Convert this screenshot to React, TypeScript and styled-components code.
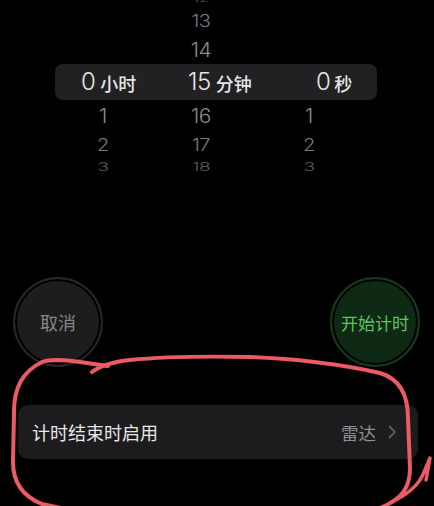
import * as React from 'react';
import styled, { createGlobalStyle } from 'styled-components';

const GlobalStyle = createGlobalStyle`
  html, body {
    margin: 0;
    padding: 0;
    background: #000;
  }
  body {
    font-family: Inter, "Noto Sans CJK SC", sans-serif;
    -webkit-font-smoothing: antialiased;
  }
`;

type Col = { value: string; label: string; offset: number; labelGap: number };

const columns: Col[] = [
  { value: '0', label: '小时', offset: 26, labelGap: 5 },
  { value: '15', label: '分钟', offset: 37, labelGap: 5 },
  { value: '0', label: '秒', offset: 65, labelGap: 4 },
];

type WheelRow = {
  height: number;
  size: number;
  squash: number;
  color: string;
  values: [string, string, string];
};

const above: WheelRow[] = [
  { height: 18, size: 18, squash: 0.45, color: '#4a4a4a', values: ['', '12', ''] },
  { height: 26, size: 20, squash: 0.85, color: '#7d7d7d', values: ['', '13', ''] },
  { height: 30, size: 21, squash: 0.95, color: '#8c8c8c', values: ['', '14', ''] },
];

const below: WheelRow[] = [
  { height: 31, size: 21, squash: 0.95, color: '#8c8c8c', values: ['1', '16', '1'] },
  { height: 27, size: 20, squash: 0.85, color: '#7d7d7d', values: ['2', '17', '2'] },
  { height: 16, size: 19, squash: 0.6, color: '#5e5e5e', values: ['3', '18', '3'] },
  { height: 8, size: 16, squash: 0.3, color: '#3a3a3a', values: ['4', '19', '4'] },
];

const App = () => {
  return (
    <Screen>
      <GlobalStyle />
      <Picker>
        <Wheel>
          {above.map((r, i) => (
            <Row key={'a' + i} $height={r.height}>
              {r.values.map((v, j) => (
                <Cell key={j}>
                  <Num $size={r.size} $squash={r.squash} $color={r.color}>{v}</Num>
                </Cell>
              ))}
            </Row>
          ))}
          <SelectedRow>
            {columns.map((c, j) => (
              <SelectedCell key={j} $offset={c.offset} $gap={c.labelGap}>
                <BigNum>{c.value}</BigNum>
                <Unit>{c.label}</Unit>
              </SelectedCell>
            ))}
          </SelectedRow>
          {below.map((r, i) => (
            <Row key={'b' + i} $height={r.height}>
              {r.values.map((v, j) => (
                <Cell key={j}>
                  <Num $size={r.size} $squash={r.squash} $color={r.color}>{v}</Num>
                </Cell>
              ))}
            </Row>
          ))}
        </Wheel>
      </Picker>

      <Buttons>
        <RoundButton $variant="cancel">取消</RoundButton>
        <RoundButton $variant="start">开始计时</RoundButton>
      </Buttons>

      <ListRow>
        <RowTitle>计时结束时启用</RowTitle>
        <RowValue>
          雷达
          <svg width="9" height="14" viewBox="0 0 9 14">
            <path d="M1.5 1.5 L7 7 L1.5 12.5" fill="none" stroke="#5c5c5e" strokeWidth="1.8" strokeLinecap="round" strokeLinejoin="round" />
          </svg>
        </RowValue>
      </ListRow>

      <Scribble viewBox="0 0 434 506" width="434" height="506">
        <path
          d="M92 372 C100 366 112 362 130 360 C160 357 200 356 250 357 C300 359 340 364 380 373 C400 379 408 395 408 418 L410 468 C410 488 402 499 380 508"
          fill="none" stroke="#ec5a63" strokeWidth="4" strokeLinecap="round" strokeLinejoin="round"
        />
        <path
          d="M108 366 C80 362 55 357 42 362 C22 372 14 388 14 412 L13 462 C13 482 22 496 42 504 L80 512"
          fill="none" stroke="#ec5a63" strokeWidth="4" strokeLinecap="round" strokeLinejoin="round"
        />
        <path
          d="M392 502 C408 494 420 484 424 472 L430 458 L426 480"
          fill="none" stroke="#ec5a63" strokeWidth="3.5" strokeLinecap="round" strokeLinejoin="round"
        />
      </Scribble>
    </Screen>
  );
};

export default App;

const Screen = styled.div`
  position: relative;
  width: 434px;
  height: 506px;
  overflow: hidden;
  background: #000;
  display: flex;
  flex-direction: column;
`;

const Picker = styled.div`
  height: 178px;
  overflow: hidden;
`;

const Wheel = styled.div`
  display: flex;
  flex-direction: column;
  margin-top: -10px;
`;

const Row = styled.div<{ $height: number }>`
  display: grid;
  grid-template-columns: 96px 100px 116px;
  margin-left: 55px;
  width: 322px;
  height: ${p => p.$height}px;
  align-items: center;
`;

const Cell = styled.div`
  display: flex;
  justify-content: center;
  align-items: center;
  height: 100%;
`;

const Num = styled.span<{ $size: number; $squash: number; $color: string }>`
  font-family: Inter, sans-serif;
  font-weight: 300;
  font-size: ${p => p.$size}px;
  color: ${p => p.$color};
  line-height: 1;
  letter-spacing: -0.5px;
  transform: scaleY(${p => p.$squash});
  display: inline-block;
`;

const SelectedRow = styled.div`
  display: grid;
  grid-template-columns: 96px 100px 116px;
  margin-left: 55px;
  width: 322px;
  height: 36px;
  align-items: center;
  background: #212123;
  border-radius: 8px;
`;

const SelectedCell = styled.div<{ $offset: number; $gap: number }>`
  display: flex;
  align-items: center;
  white-space: nowrap;
  gap: ${p => p.$gap}px;
  padding-left: ${p => p.$offset}px;
`;

const BigNum = styled.span`
  font-family: Inter, sans-serif;
  font-weight: 300;
  font-size: 24px;
  letter-spacing: -0.5px;
  color: #e6e6e6;
  line-height: 1;
`;

const Unit = styled.span`
  font-family: "Noto Sans CJK SC", sans-serif;
  font-size: 18px;
  font-weight: 500;
  color: #e6e6e6;
  line-height: 1;
  margin-top: 1px;
`;

const Buttons = styled.div`
  display: flex;
  justify-content: space-between;
  padding: 0 14px 0 13px;
  margin-top: 99px;
`;

const RoundButton = styled.div<{ $variant: 'cancel' | 'start' }>`
  width: 86px;
  height: 86px;
  border-radius: 50%;
  display: flex;
  align-items: center;
  justify-content: center;
  font-family: "Noto Sans CJK SC", sans-serif;
  font-size: ${p => (p.$variant === 'start' ? '17px' : '18px')};
  color: ${p => (p.$variant === 'start' ? '#5cc566' : '#858585')};
  background: ${p => (p.$variant === 'start' ? '#0f2a14' : '#1d1d1d')};
  border: 2px solid ${p => (p.$variant === 'start' ? '#143a1b' : '#262626')};
  box-shadow: inset 0 0 0 2px #000;
`;

const ListRow = styled.div`
  margin: 38px 16px 0 18px;
  height: 54px;
  border-radius: 10px;
  background: #1c1c1e;
  display: flex;
  align-items: center;
  justify-content: space-between;
  padding: 0 21px 0 14px;
`;

const RowTitle = styled.span`
  font-family: "Noto Sans CJK SC", sans-serif;
  font-size: 18px;
  color: #e8e8e8;
`;

const RowValue = styled.span`
  display: flex;
  align-items: center;
  gap: 12px;
  font-family: "Noto Sans CJK SC", sans-serif;
  font-size: 17.5px;
  color: #8e8e8e;
`;

const Scribble = styled.svg`
  position: absolute;
  left: 0;
  top: 0;
  pointer-events: none;
`;
